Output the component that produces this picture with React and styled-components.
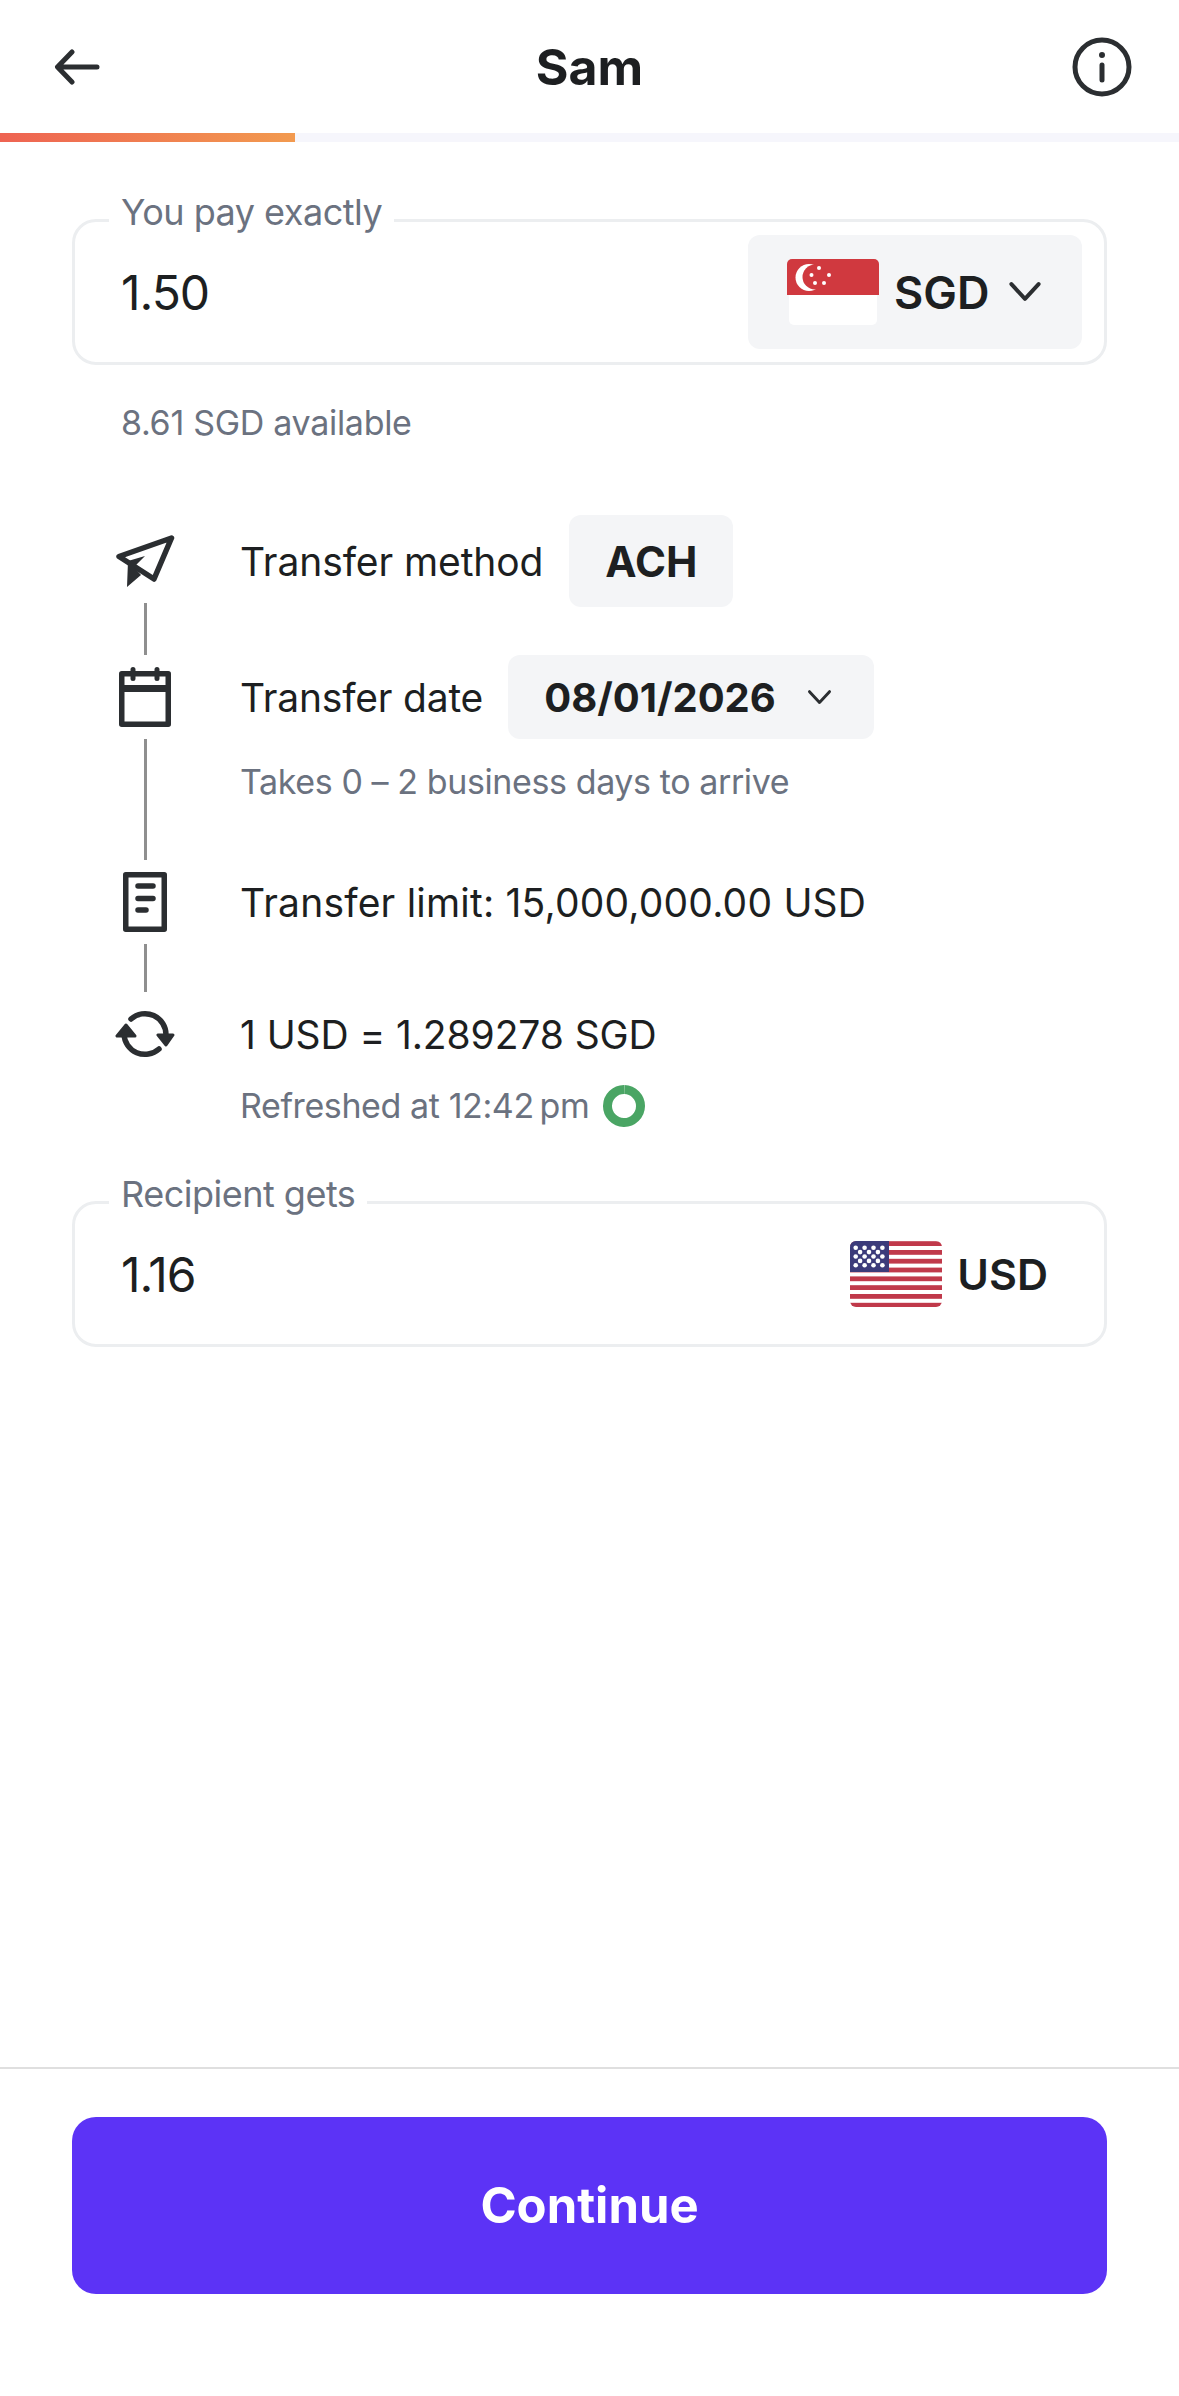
import React from "react";
import styled, { createGlobalStyle } from "styled-components";

const GlobalStyle = createGlobalStyle`
  html, body {
    margin: 0;
    padding: 0;
    background: #fff;
  }
  body {
    font-family: "Inter", "Liberation Sans", sans-serif;
    color: #1d1f21;
  }
`;

const Page = styled.div`
  width: 1179px;
  min-height: 2396px;
  display: flex;
  flex-direction: column;
  box-sizing: border-box;
`;

const Header = styled.header`
  height: 133px;
  padding: 0 47px 0 54px;
  box-sizing: border-box;
  display: grid;
  grid-template-columns: 1fr auto 1fr;
  align-items: center;

  & > svg:last-child {
    justify-self: end;
  }
`;

const Title = styled.h1`
  margin: 0 7px 0 0;
  font-size: 50px;
  font-weight: 700;
  letter-spacing: 0;
`;

const Progress = styled.div`
  height: 9px;
  background: #f6f6fc;
`;

const ProgressFill = styled.div`
  height: 100%;
  background: linear-gradient(90deg, #ee6352, #f29a4f);
`;

const Form = styled.main`
  padding: 77px 72px 0;
  display: flex;
  flex-direction: column;
`;

const Field = styled.div`
  position: relative;
  height: 146px;
  box-sizing: border-box;
  border: 3px solid #eceef0;
  border-radius: 24px;
  padding: 0 22px 0 46px;
  display: flex;
  align-items: center;
  justify-content: space-between;
`;

const FieldLabel = styled.span`
  position: absolute;
  left: 34px;
  top: -32px;
  padding: 0 12px;
  background: #fff;
  font-size: 36px;
  line-height: 44px;
  color: #6b7280;
  letter-spacing: -0.5px;
`;

const Amount = styled.span`
  font-size: 48px;
  letter-spacing: -1px;
`;

const CurrencySelect = styled.div`
  width: 334px;
  height: 114px;
  box-sizing: border-box;
  padding-left: 39px;
  background: #f4f5f7;
  border-radius: 12px;
  display: flex;
  align-items: center;
  gap: 15px;
`;

const SelectChevron = styled.span`
  margin-left: 4px;
  display: flex;
`;

const CurrencyStatic = styled.div`
  display: flex;
  align-items: center;
  gap: 15px;
  padding-right: 34px;
`;

const CurrencyCode = styled.span`
  font-size: ${(p) => p.$size}px;
  font-weight: 600;
`;

const Hint = styled.p`
  margin: 36px 0 0 49px;
  font-size: 34px;
  line-height: 44px;
  color: #6b7280;
  letter-spacing: -0.3px;
`;

const Steps = styled.div`
  margin-top: 86px;
  margin-bottom: 73px;
  display: flex;
  flex-direction: column;
`;

const Step = styled.div`
  display: flex;
  gap: 22px;
`;

const Rail = styled.div`
  width: 146px;
  flex: none;
  display: flex;
  flex-direction: column;
  align-items: center;
`;

const IconSlot = styled.div`
  height: 60px;
  display: flex;
  align-items: center;
  justify-content: center;
`;

const Connector = styled.div`
  width: 3px;
  height: ${(p) => p.$length}px;
  margin: 12px 0;
  background: #8f8f8f;
`;

const StepBody = styled.div`
  display: flex;
  flex-direction: column;
`;

const StepLine = styled.div`
  height: 60px;
  display: flex;
  align-items: center;
  gap: ${(p) => p.$gap || 0}px;
  font-size: 39px;
  letter-spacing: ${(p) => p.$tracking ?? -0.1}px;
  white-space: nowrap;
`;

const Chip = styled.div`
  height: ${(p) => p.$height}px;
  box-sizing: border-box;
  padding: 0 ${(p) => p.$padRight}px 0 36px;
  background: #f4f5f7;
  border-radius: 12px;
  display: flex;
  align-items: center;
  gap: 31px;
  font-size: ${(p) => p.$size}px;
  font-weight: 700;
  letter-spacing: 0;
`;

const StepNote = styled.div`
  margin-top: ${(p) => p.$top}px;
  display: flex;
  align-items: center;
  gap: 14px;
  font-size: 34px;
  line-height: 44px;
  color: #6b7280;
  letter-spacing: -0.4px;
  white-space: nowrap;
`;

const Footer = styled.footer`
  margin-top: auto;
  border-top: 2px solid #dfdfdf;
  padding: 48px 72px 102px;
`;

const ContinueButton = styled.button`
  width: 100%;
  height: 177px;
  border: 0;
  border-radius: 24px;
  background: #5c33f6;
  color: #fff;
  font-family: inherit;
  font-size: 49px;
  font-weight: 700;
`;

const stroke = "#2b2e31";

const BackIcon = () => (
  <svg width="46" height="36" viewBox="0 0 46 36" fill="none" stroke={stroke} strokeWidth="5" strokeLinecap="round" strokeLinejoin="round">
    <path d="M43 18H4M18 3 3.500 18 18 33" />
  </svg>
);

const InfoIcon = () => (
  <svg width="60" height="60" viewBox="0 0 60 60" fill="none" stroke={stroke} strokeWidth="5" strokeLinecap="round">
    <circle cx="30" cy="30" r="27" />
    <path d="M30 28v15" />
    <circle cx="30" cy="18" r="2" fill={stroke} strokeWidth="2" />
  </svg>
);

const SendIcon = () => (
  <svg width="60" height="52" viewBox="0 0 60 52" fill="none" stroke={stroke} strokeWidth="5.500" strokeLinejoin="round">
    <path d="M56.500 3 4 21.500 39 44z" />
    <path d="M30 21 13 26l-1 26 14-12-7-8z" fill={stroke} stroke="none" />
  </svg>
);

const CalendarIcon = () => (
  <svg width="52" height="60" viewBox="0 0 52 60" fill="none" stroke={stroke} strokeWidth="5.500" strokeLinejoin="round">
    <rect x="2.750" y="6.750" width="46.500" height="50.500" />
    <path d="M2 21.500h48" strokeWidth="7" />
    <path d="M14 2.500v9M38 2.500v9" strokeLinecap="round" strokeWidth="5" />
  </svg>
);

const LimitIcon = () => (
  <svg width="44" height="60" viewBox="0 0 44 60" fill="none" stroke={stroke} strokeWidth="5.500" strokeLinejoin="round" strokeLinecap="round">
    <rect x="2.750" y="2.750" width="38.500" height="54.500" />
    <path d="M15 14h15M15 26.500h15M15 38h8" />
  </svg>
);

const RateIcon = () => (
  <svg width="60" height="48" viewBox="0 0 60 48" fill="none" stroke={stroke} strokeWidth="5.500" strokeLinecap="round">
    <path d="M16 9A21 21 0 0 1 51 25" />
    <path d="M44 39A21 21 0 0 1 9 24" />
    <path d="M11 15 2 26h18zM51 35l-8-10h15z" fill={stroke} strokeWidth="3" strokeLinejoin="round" />
  </svg>
);

const Chevron = ({ size }) => (
  <svg width={size} height={size} viewBox="0 0 30 30" fill="none" stroke={stroke} strokeWidth="3.500" strokeLinecap="round" strokeLinejoin="round">
    <path d="M3 8l12 13L27 8" />
  </svg>
);

const FreshnessRing = () => (
  <svg width="42" height="42" viewBox="0 0 42 42" fill="none">
    <circle cx="21" cy="21" r="16.500" stroke="#4aa564" strokeWidth="9" strokeDasharray="102.700 1" transform="rotate(-89 21 21)" />
  </svg>
);

const SingaporeFlag = () => (
  <svg width="92" height="66" viewBox="0 0 92 66">
    <rect x="2" y="30" width="88" height="36" rx="5" fill="#fff" />
    <path d="M0 36V5a5 5 0 0 1 5-5h82a5 5 0 0 1 5 5v31z" fill="#d0393f" />
    <circle cx="22" cy="18.500" r="13.500" fill="#fff" />
    <circle cx="28" cy="18" r="12.500" fill="#d0393f" />
    <g fill="#fff">
      <circle cx="32" cy="9" r="2" />
      <circle cx="42" cy="16" r="2" />
      <circle cx="37" cy="24" r="2" />
      <circle cx="28" cy="24" r="2" />
      <circle cx="24.500" cy="16" r="2" />
    </g>
  </svg>
);

const flagStars = [];
for (let row = 0; row < 5; row++) {
  for (let col = 0; col < (row % 2 ? 3 : 4); col++) {
    flagStars.push([(row % 2 ? 10.1 : 5.7) + col * 8.9, 6.7 + row * 4.4]);
  }
}

const UsaFlag = () => (
  <svg width="92" height="66" viewBox="0 0 92 66">
    <defs>
      <clipPath id="usa-corners">
        <rect width="92" height="66" rx="6" />
      </clipPath>
    </defs>
    <g clipPath="url(#usa-corners)">
      <rect width="92" height="66" fill="#fff" />
      {[...Array(8)].map((_, i) => (
        <rect key={i} y={i * 8.8 + 0.2} width="92" height="4.800" fill="#c0394a" />
      ))}
      <rect width="39" height="31" fill="#3c3b7a" />
      {flagStars.map(([cx, cy], i) => (
        <circle key={i} cx={cx} cy={cy} r="2.300" fill="#fff" />
      ))}
    </g>
  </svg>
);

export default function App() {
  return (
    <Page>
      <GlobalStyle />
      <Header>
        <BackIcon />
        <Title>Sam</Title>
        <InfoIcon />
      </Header>
      <Progress>
        <ProgressFill style={{ width: `${(295 / 1179) * 100}%` }} />
      </Progress>

      <Form>
        <Field>
          <FieldLabel>You pay exactly</FieldLabel>
          <Amount>1.50</Amount>
          <CurrencySelect>
            <SingaporeFlag />
            <CurrencyCode $size={45}>SGD</CurrencyCode>
            <SelectChevron>
              <Chevron size={34} />
            </SelectChevron>
          </CurrencySelect>
        </Field>
        <Hint>8.61 SGD available</Hint>

        <Steps>
          <Step>
            <Rail>
              <IconSlot>
                <SendIcon />
              </IconSlot>
              <Connector $length={52} />
            </Rail>
            <StepBody>
              <StepLine $gap={26}>
                Transfer method
                <Chip $height={92} $padRight={36} $size={42}>ACH</Chip>
              </StepLine>
            </StepBody>
          </Step>

          <Step>
            <Rail>
              <IconSlot>
                <CalendarIcon />
              </IconSlot>
              <Connector $length={121} />
            </Rail>
            <StepBody>
              <StepLine $gap={25} $tracking={-0.2}>
                Transfer date
                <Chip $height={84} $padRight={42} $size={40}>
                  08/01/2026
                  <Chevron size={25} />
                </Chip>
              </StepLine>
              <StepNote $top={33}>Takes 0 – 2 business days to arrive</StepNote>
            </StepBody>
          </Step>

          <Step>
            <Rail>
              <IconSlot>
                <LimitIcon />
              </IconSlot>
              <Connector $length={48} />
            </Rail>
            <StepBody>
              <StepLine $tracking={0.2}>Transfer limit: 15,000,000.00 USD</StepLine>
            </StepBody>
          </Step>

          <Step>
            <Rail>
              <IconSlot>
                <RateIcon />
              </IconSlot>
            </Rail>
            <StepBody>
              <StepLine>1 USD = 1.289278 SGD</StepLine>
              <StepNote $top={20}>
                Refreshed at 12:42{"\u2009"}pm
                <FreshnessRing />
              </StepNote>
            </StepBody>
          </Step>
        </Steps>

        <Field>
          <FieldLabel>Recipient gets</FieldLabel>
          <Amount>1.16</Amount>
          <CurrencyStatic>
            <UsaFlag />
            <CurrencyCode $size={43}>USD</CurrencyCode>
          </CurrencyStatic>
        </Field>
      </Form>

      <Footer>
        <ContinueButton>Continue</ContinueButton>
      </Footer>
    </Page>
  );
}
